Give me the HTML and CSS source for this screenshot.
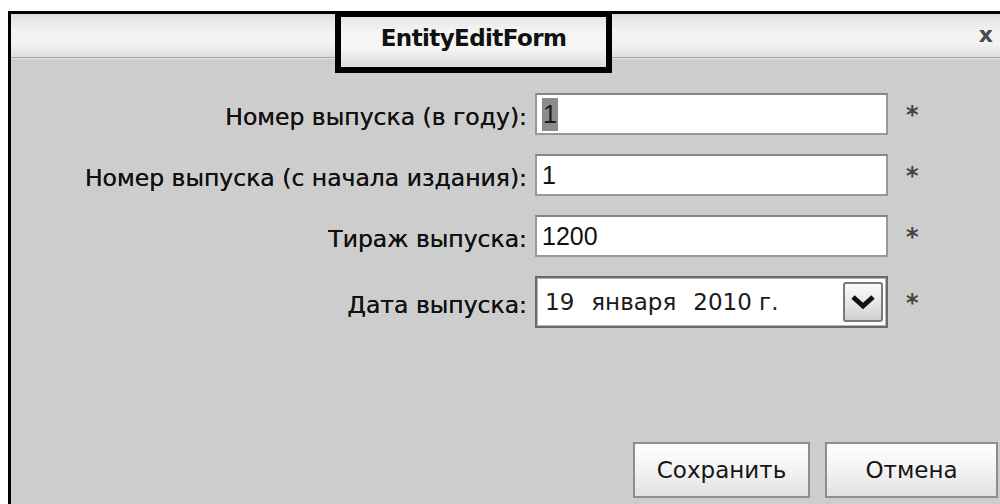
FILE: index.html
```html
<!DOCTYPE html>
<html lang="ru">
<head>
<meta charset="utf-8">
<title>EntityEditForm</title>
<link rel="stylesheet" href="styles.css">
</head>
<body>
<div class="page">
  <div class="dialog">
    <div class="titlebar">
      <span class="close">x</span>
    </div>
    <div class="title-box"><span class="title">EntityEditForm</span></div>
    <div class="content">
      <form class="form">
        <label class="label">Номер выпуска (в году):</label>
        <div class="field"><span class="selected">1</span></div>
        <span class="req">*</span>

        <label class="label">Номер выпуска (с начала издания):</label>
        <div class="field">1</div>
        <span class="req">*</span>

        <label class="label">Тираж выпуска:</label>
        <div class="field">1200</div>
        <span class="req">*</span>

        <label class="label">Дата выпуска:</label>
        <div class="field date">
          <span class="date-text"><span>19</span><span>января</span><span>2010 г.</span></span>
          <span class="drop">
            <svg width="24" height="16" viewBox="0 0 24 16"><polyline points="2,3 12,12 22,3" fill="none" stroke="#111" stroke-width="5" stroke-linejoin="miter"/></svg>
          </span>
        </div>
        <span class="req">*</span>
      </form>
      <div class="actions">
        <button type="button" class="btn save">Сохранить</button>
        <button type="button" class="btn cancel">Отмена</button>
      </div>
    </div>
  </div>
</div>
</body>
</html>
```

FILE: styles.css
```css
html, body {
  margin: 0;
  padding: 0;
  background: #ffffff;
}

.page {
  height: 504px;
  padding: 11px 0 0 8px;
  box-sizing: border-box;
  overflow: hidden;
}

.dialog {
  position: relative;
  height: 493px;
  border-top: 3px solid #000;
  border-left: 3px solid #000;
  background: #cdcdcd;
  box-sizing: border-box;
  display: flex;
  flex-direction: column;
}

/* window header strip */
.titlebar {
  height: 43px;
  flex: none;
  display: flex;
  align-items: center;
  justify-content: flex-end;
  padding-right: 7px;
  background: linear-gradient(to bottom, #dcdcdc 0px, #e9e9e9 8px, #f3f3f3 18px, #f2f2f2 30px, #e6e6e6 38px, #dedede 43px);
  border-bottom: 1px solid #a4a4a4;
  box-shadow: 0 1px 0 #e2e2e2;
}

.close {
  font-family: "DejaVu Sans", sans-serif;
  font-weight: bold;
  font-size: 22px;
  color: #4a4a4a;
  line-height: 1;
  margin-top: -2px;
}

/* highlighted title frame */
.title-box {
  position: absolute;
  left: 324px;
  top: -3px;
  width: 277px;
  height: 62px;
  box-sizing: border-box;
  border: 6px solid #000;
  background: linear-gradient(to bottom, #e6e6e6 0px, #f4f4f4 14px, #f6f6f6 30px, #e9e9e9 40px, #dcdcdc 50px);
  display: flex;
  justify-content: center;
  align-items: flex-start;
  padding-top: 10px;
}

.title {
  font-family: "DejaVu Sans", sans-serif;
  font-weight: bold;
  font-size: 23px;
  letter-spacing: -0.6px;
  color: #111;
  line-height: 1;
}

.content {
  flex: 1;
  padding-top: 35px;
  display: flex;
  flex-direction: column;
}

.form {
  display: grid;
  grid-template-columns: 516px 353px auto;
  column-gap: 8px;
  row-gap: 19px;
  align-items: center;
  margin: 0;
}

.label {
  text-align: right;
  font-family: "DejaVu Sans", sans-serif;
  font-size: 23.5px;
  color: #111;
  white-space: nowrap;
  padding-top: 6px;
  text-shadow: 0 0 0.4px #111;
}

.field {
  height: 42px;
  box-sizing: border-box;
  background: #fff;
  border: 2px solid #989898;
  border-top-color: #858585;
  display: flex;
  align-items: center;
  padding-left: 5px;
  font-family: "Liberation Sans", Arial, sans-serif;
  font-size: 25px;
  color: #111;
}

.selected {
  background: #8c8c8c;
  color: #1a1a1a;
  padding: 2px 1px;
  line-height: 29px;
}

.field.date {
  height: 52px;
  border: 2px solid #6a6a6a;
  box-shadow: inset 0 0 0 1px #b4b4b4;
  justify-content: space-between;
  padding-left: 8px;
  padding-right: 3px;
}

.date-text {
  display: flex;
  gap: 17px;
  font-family: "DejaVu Sans", sans-serif;
  font-size: 23px;
  color: #1a1a1a;
}

.drop {
  width: 40px;
  height: 40px;
  box-sizing: border-box;
  border: 2px solid #7a7a7a;
  border-radius: 3px;
  background: linear-gradient(to bottom, #fbfbfb, #e6e6e6 55%, #cfcfcf);
  display: flex;
  align-items: center;
  justify-content: center;
}

.req {
  margin-left: 10px;
  font-family: "DejaVu Sans", sans-serif;
  font-weight: bold;
  font-size: 24px;
  color: #444;
  margin-top: 2px;
}

.actions {
  margin-top: 114px;
  display: flex;
  justify-content: flex-end;
  gap: 15px;
  padding-right: 2px;
}

.btn {
  height: 56px;
  box-sizing: border-box;
  border: 2px solid #8e8e8e;
  background: linear-gradient(to bottom, #ffffff, #f3f3f3 50%, #e2e2e2);
  font-family: "DejaVu Sans", sans-serif;
  font-size: 23px;
  color: #151515;
  padding: 0;
}

.btn.save { width: 177px; }
.btn.cancel { width: 173px; }
```
